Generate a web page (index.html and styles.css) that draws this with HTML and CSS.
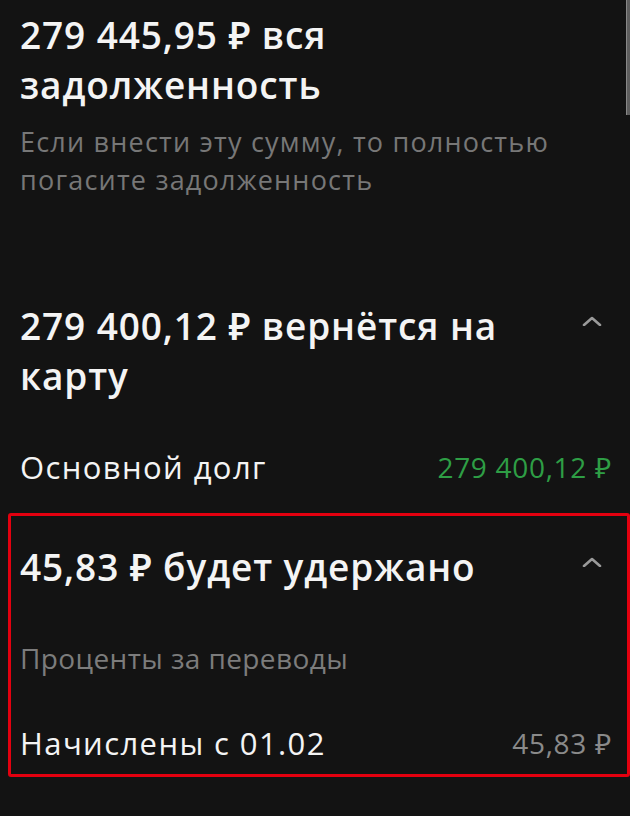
FILE: index.html
```html
<!DOCTYPE html>
<html lang="ru">
  <head>
    <meta charset="UTF-8" />
    <meta name="viewport" content="width=device-width, initial-scale=1.0" />
    <title>Погашение кредита</title>
    <link rel="stylesheet" href="styles.css">
  </head>
  <body>
    <div class="scrollbar"></div>
    <main class="page">
      <section class="block total">
        <div class="head">
          <h1 class="title">279 445,95 ₽ вся задолженность</h1>
        </div>
        <p class="hint">Если внести эту сумму, то полностью погасите задолженность</p>
      </section>

      <section class="block refund">
        <div class="head">
          <h2 class="title">279 400,12 ₽ вернётся на карту</h2>
          <svg class="chevron" width="20" height="10" viewBox="0 0 20 10">
            <path d="M2 9 L10 2 L18 9" />
          </svg>
        </div>
        <div class="row">
          <span class="label">Основной долг</span>
          <span class="sum green">279 400,12 ₽</span>
        </div>
      </section>

      <section class="block held">
        <div class="head">
          <h2 class="title">45,83 ₽ будет удержано</h2>
          <svg class="chevron" width="20" height="10" viewBox="0 0 20 10">
            <path d="M2 9 L10 2 L18 9" />
          </svg>
        </div>
        <p class="group">Проценты за переводы</p>
        <div class="row">
          <span class="label">Начислены с 01.02</span>
          <span class="sum muted">45,83 ₽</span>
        </div>
      </section>
    </main>
  </body>
</html>
```

FILE: styles.css
```css
* {
  margin: 0;
  padding: 0;
  box-sizing: border-box;
  font-family: "Open Sans", "Noto Sans", sans-serif;
}

body {
  background: #131313;
  color: #f4f4f4;
  position: relative;
  min-height: 816px;
  overflow: hidden;
}

.scrollbar {
  position: absolute;
  top: 0;
  right: 0;
  width: 4px;
  height: 115px;
  background: #5e5e5e;
  border-left: 1px solid #888;
}

.page {
  padding: 10px 18px 0 20px;
}

.head {
  display: flex;
  justify-content: space-between;
  align-items: flex-start;
}

.title {
  font-size: 37px;
  font-weight: 600;
  line-height: 50px;
  letter-spacing: 0.9px;
  max-width: 540px;
}

.chevron {
  margin: 15px 10px 0 0;
  flex-shrink: 0;
}

.chevron path {
  fill: none;
  stroke: #9a9a9a;
  stroke-width: 2.6;
  stroke-linecap: round;
  stroke-linejoin: round;
}

.hint {
  margin-top: 13px;
  font-size: 27px;
  line-height: 38px;
  letter-spacing: 1.2px;
  color: #777;
}

.refund {
  margin-top: 102px;
}

.row {
  display: flex;
  justify-content: space-between;
  align-items: center;
  margin-top: 46px;
  line-height: 40px;
}

.label {
  font-size: 31px;
  letter-spacing: 1.4px;
}

.sum {
  font-size: 28px;
  letter-spacing: 0.7px;
}

.green {
  color: #2e9e45;
}

.muted {
  color: #8a8a8a;
}

.held {
  margin: 26px -18px 0 -12px;
  padding: 26px 15px 11px 9px;
  border: 3px solid #e3000f;
  border-radius: 3px;
}

.group {
  margin-top: 46px;
  font-size: 28px;
  line-height: 40px;
  letter-spacing: 0.4px;
  color: #7c7c7c;
}

.held .row {
  margin-top: 45px;
}
```
